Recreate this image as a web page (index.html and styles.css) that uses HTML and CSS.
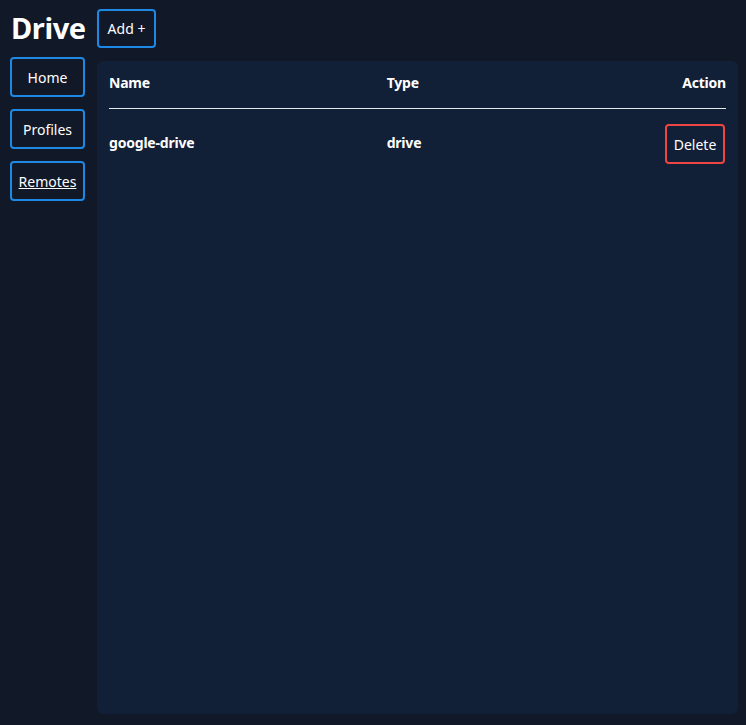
FILE: index.html
```html
<!DOCTYPE html>
<html>
<head>
<meta charset="utf-8">
<link rel="stylesheet" href="styles.css">
</head>
<body>
<div class="app">
  <div class="side">
    <h1 class="title">Drive</h1>
    <nav class="nav">
      <a class="btn nav-btn">Home</a>
      <a class="btn nav-btn">Profiles</a>
      <a class="btn nav-btn active">Remotes</a>
    </nav>
  </div>
  <div class="main">
    <div class="toolbar">
      <button class="btn add-btn">Add +</button>
    </div>
    <div class="panel">
      <table class="table">
        <thead>
          <tr>
            <th class="col-name">Name</th>
            <th class="col-type">Type</th>
            <th class="col-action">Action</th>
          </tr>
        </thead>
        <tbody>
          <tr>
            <td class="col-name">google-drive</td>
            <td class="col-type">drive</td>
            <td class="col-action"><button class="btn del-btn">Delete</button></td>
          </tr>
        </tbody>
      </table>
    </div>
  </div>
</div>
</body>
</html>
```

FILE: styles.css
```css
html, body {
  margin: 0;
  height: 100%;
}
body {
  background: #111827;
  color: #ffffff;
  font-family: "Noto Sans", "Open Sans", sans-serif;
  font-size: 14px;
}
.app {
  box-sizing: border-box;
  height: 100%;
  display: flex;
  gap: 12px;
  padding: 9px 8px 11px 10px;
}
.side {
  width: 75px;
  display: flex;
  flex-direction: column;
}
.title {
  margin: 0;
  height: 48px;
  font-size: 29px;
  font-weight: 700;
  line-height: 38px;
  padding-left: 1px;
  letter-spacing: -0.4px;
}
.nav {
  display: flex;
  flex-direction: column;
  gap: 12px;
}
.btn {
  box-sizing: border-box;
  display: flex;
  align-items: center;
  justify-content: center;
  height: 40px;
  border: 2px solid #1e88e5;
  border-radius: 4px;
  background: transparent;
  color: #ffffff;
  font-family: inherit;
  font-size: 14px;
  cursor: pointer;
}
.nav-btn.active {
  text-decoration: underline;
}
.main {
  flex: 1;
  display: flex;
  flex-direction: column;
}
.toolbar {
  height: 52px;
}
.add-btn {
  width: 59px;
  height: 39px;
}
.panel {
  flex: 1;
  background: #111f37;
  border-radius: 6px;
  padding: 12px;
}
.table {
  width: 100%;
  border-collapse: collapse;
  letter-spacing: -0.2px;
}
.table th {
  font-weight: 700;
  padding: 0 0 15px;
  line-height: 20px;
  border-bottom: 1px solid #e5e7eb;
  text-align: left;
}
.table td {
  font-weight: 700;
  padding: 15px 0 0;
  text-align: left;
  vertical-align: middle;
}
.table td.col-name, .table td.col-type {
  padding-bottom: 3px;
}
.col-name { width: 45%; }
.table .col-action { text-align: right; }
.del-btn {
  display: inline-flex;
  width: 60px;
  border-color: #ef4444;
  font-weight: 400;
  margin-right: 1px;
  letter-spacing: 0;
}
```
